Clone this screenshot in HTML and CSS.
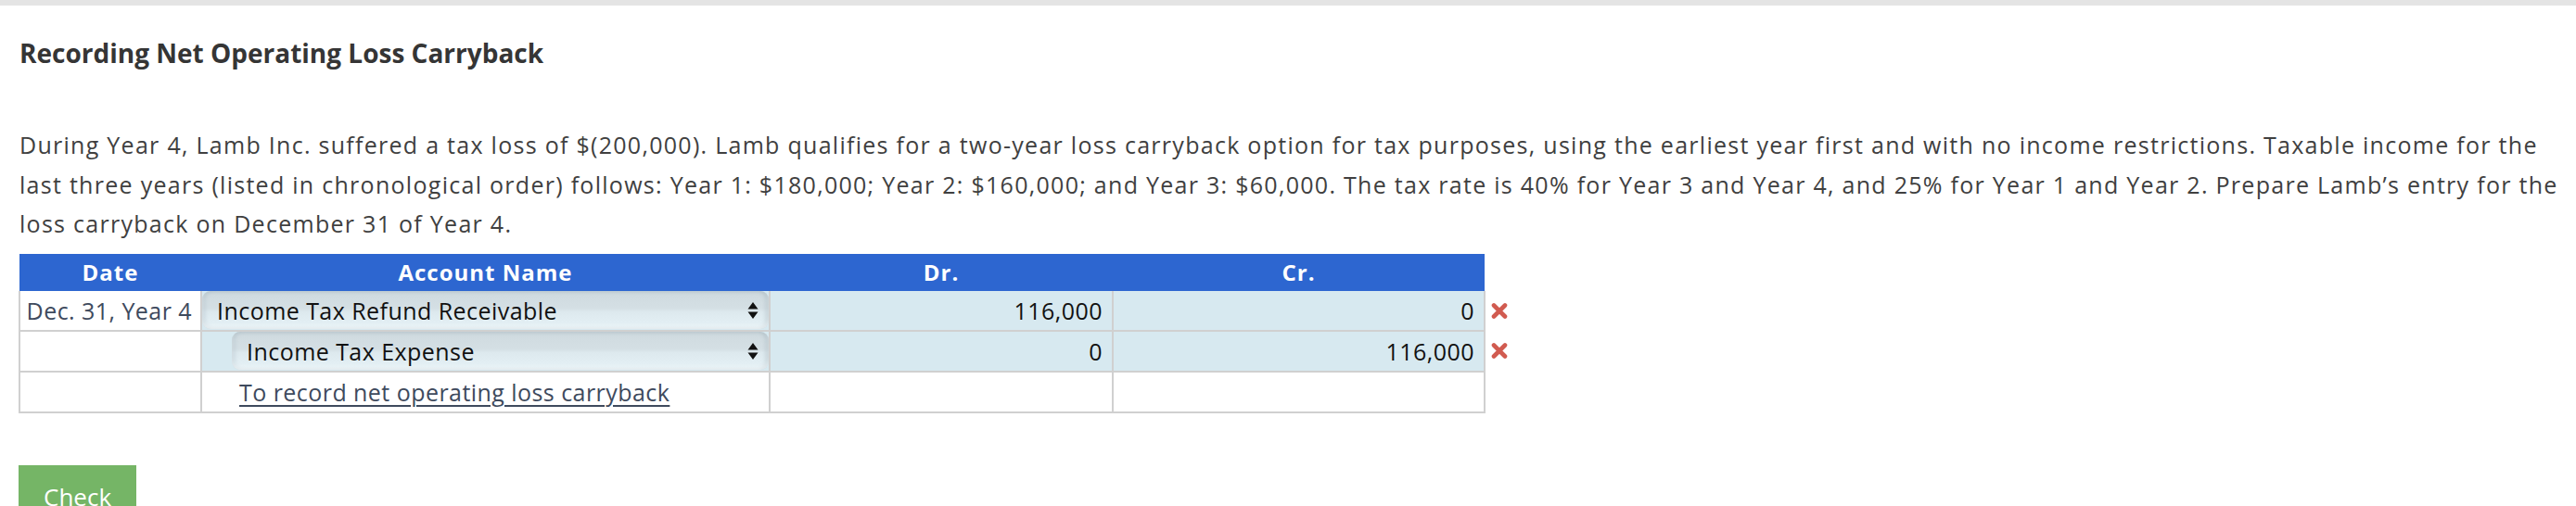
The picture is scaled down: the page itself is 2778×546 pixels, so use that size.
FILE: index.html
```html
<!DOCTYPE html>
<html lang="en">
<head>
<meta charset="utf-8">
<title>Recording Net Operating Loss Carryback</title>
<link rel="stylesheet" href="styles.css">
</head>
<body>
<div class="topbar"></div>
<main class="content">
  <h2 class="title">Recording Net Operating Loss Carryback</h2>
  <p class="question">During Year 4, Lamb Inc. suffered a tax loss of $(200,000). Lamb qualifies for a two-year loss carryback option for tax purposes, using the earliest year first and with no income restrictions. Taxable income for the last three years (listed in chronological order) follows: Year 1: $180,000; Year 2: $160,000; and Year 3: $60,000. The tax rate is 40% for Year 3 and Year 4, and 25% for Year 1 and Year 2. Prepare Lamb’s entry for the loss carryback on December 31 of Year 4.</p>
  <table class="journal">
    <colgroup>
      <col class="c-date"><col class="c-acct"><col class="c-dr"><col class="c-cr"><col class="c-mark">
    </colgroup>
    <thead>
      <tr><th>Date</th><th>Account Name</th><th>Dr.</th><th>Cr.</th><th class="mark-head"></th></tr>
    </thead>
    <tbody>
      <tr>
        <td class="date">Dec. 31, Year 4</td>
        <td class="acct filled"><div class="select"><span>Income Tax Refund Receivable</span><svg class="arrows" width="12" height="20" viewBox="0 0 12 20"><path d="M6 1 L11.5 8.5 H0.5 Z M0.5 11.5 H11.5 L6 19 Z" fill="#111"/></svg></div></td>
        <td class="amt filled">116,000</td>
        <td class="amt filled">0</td>
        <td class="mark"><svg class="cross" width="18" height="17" viewBox="0 0 18 17"><path d="M3 2.5 L15 14.5 M15 2.5 L3 14.5" stroke="#d15b50" stroke-width="4.6" stroke-linecap="round"/></svg></td>
      </tr>
      <tr>
        <td class="date"></td>
        <td class="acct filled"><div class="select indent"><span>Income Tax Expense</span><svg class="arrows" width="12" height="20" viewBox="0 0 12 20"><path d="M6 1 L11.5 8.5 H0.5 Z M0.5 11.5 H11.5 L6 19 Z" fill="#111"/></svg></div></td>
        <td class="amt filled">0</td>
        <td class="amt filled">116,000</td>
        <td class="mark"><svg class="cross" width="18" height="17" viewBox="0 0 18 17"><path d="M3 2.5 L15 14.5 M15 2.5 L3 14.5" stroke="#d15b50" stroke-width="4.6" stroke-linecap="round"/></svg></td>
      </tr>
      <tr>
        <td class="date"></td>
        <td class="acct"><a class="memo" href="#">To record net operating loss carryback</a></td>
        <td class="amt"></td>
        <td class="amt"></td>
        <td class="mark"></td>
      </tr>
    </tbody>
  </table>
  <button class="check" type="button">Check</button>
</main>
</body>
</html>
```
FILE: styles.css
```css
html, body {
  margin: 0;
  padding: 0;
  background: #ffffff;
}

body {
  font-family: "Open Sans", "DejaVu Sans", sans-serif;
  color: #404040;
}

.topbar {
  height: 6px;
  background: #e4e4e4;
}

.content {
  padding: 0 21px;
}

.title {
  margin: 31px 0 0;
  font-size: 28px;
  line-height: 40px;
  font-weight: 700;
  color: #353535;
}

.question {
  margin: 58px -16px 0 0;
  font-size: 25px;
  line-height: 42.5px;
  letter-spacing: 1.28px;
  color: #404040;
}

.journal {
  margin-top: 11px;
  margin-left: -1px;
  border-collapse: collapse;
  table-layout: fixed;
  font-size: 25px;
  letter-spacing: 0.45px;
}

.c-date { width: 196px; }
.c-acct { width: 613px; }
.c-dr { width: 370px; }
.c-cr { width: 401px; }
.c-mark { width: 40px; }

.journal th {
  height: 40px;
  padding: 0;
  background: #2d66d0;
  color: #ffffff;
  font-weight: 700;
  font-size: 24px;
  letter-spacing: 1px;
  text-align: center;
  border: 0;
}

.journal th.mark-head {
  background: transparent;
}

.journal td {
  height: 42px;
  padding: 0;
  border: 2px solid #d0d0d0;
  color: #111111;
  white-space: nowrap;
}

.journal tbody tr:first-child td {
  border-top: 0;
}

.journal td.mark {
  border: 0;
  padding-left: 6px;
  vertical-align: middle;
}

.journal td.filled {
  background: #d7e9f0;
}

.journal td.date {
  text-align: right;
  padding-right: 9px;
  color: #3e4a5d;
}

.journal td.amt {
  text-align: right;
  padding-right: 10px;
}

.select {
  height: 41px;
  box-sizing: border-box;
  display: flex;
  align-items: center;
  justify-content: space-between;
  padding: 0 11px 0 16px;
  border-radius: 9px;
  background: linear-gradient(#cfdadf 0%, #d4dfe4 45%, #dde9ee 55%, #e6f2f7 100%);
  box-shadow: inset 0 -3px 4px rgba(255, 255, 255, 0.55), inset -3px 0 4px rgba(150, 170, 180, 0.45), inset 3px 0 4px rgba(150, 170, 180, 0.35);
  color: #111111;
}

.select.indent {
  margin-left: 32px;
}

.arrows {
  display: block;
  flex: none;
}

.cross {
  display: block;
}

.memo {
  display: inline-block;
  padding-left: 40px;
  color: #3e4a5d;
  text-decoration: underline;
  text-decoration-thickness: 2px;
  text-underline-offset: 4px;
}

.check {
  display: block;
  margin-top: 56px;
  margin-left: -1px;
  padding: 16px 27px 20px;
  border: 0;
  background: #75b566;
  color: #ffffff;
  font-family: "Open Sans", "DejaVu Sans", sans-serif;
  font-size: 26px;
  line-height: 36px;
}
```
